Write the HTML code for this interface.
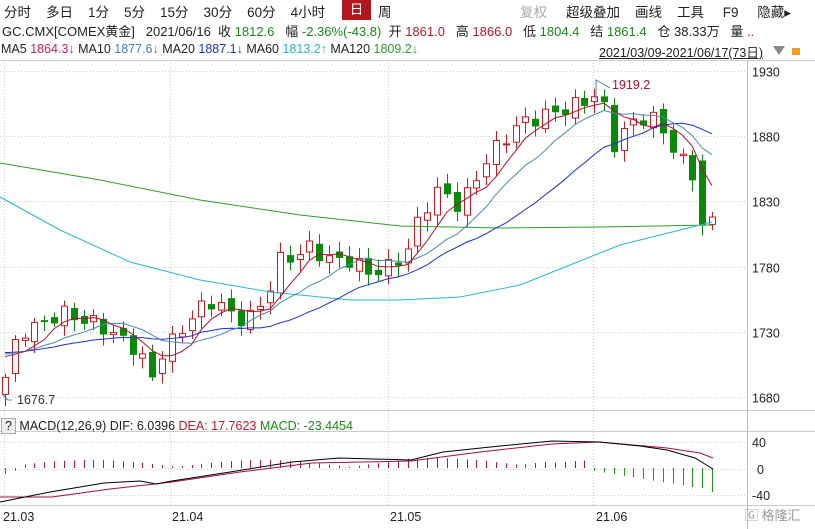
<!DOCTYPE html><html><head><meta charset="utf-8"><style>
body{margin:0;width:815px;height:529px;background:#fff;font-family:"Liberation Sans","Noto Sans CJK SC",sans-serif;overflow:hidden;position:relative}
.t{position:absolute;white-space:nowrap;font-size:13px;color:#222}
.r{color:#c0162c}.g{color:#1a8a1a}
</style></head><body>
<div class="t" style="top:1px;left:4px;font-size:13.5px;word-spacing:0">分时&nbsp;&nbsp;&nbsp;&nbsp;多日&nbsp;&nbsp;&nbsp;&nbsp;1分&nbsp;&nbsp;&nbsp;&nbsp;5分&nbsp;&nbsp;&nbsp;&nbsp;15分&nbsp;&nbsp;&nbsp;&nbsp;30分&nbsp;&nbsp;&nbsp;&nbsp;60分&nbsp;&nbsp;&nbsp;&nbsp;4小时</div>
<div style="position:absolute;left:342px;top:0;width:29px;height:20px;background:#b3171d;color:#fff;font-size:13.5px;text-align:center;line-height:20px">日</div>
<div class="t" style="top:1px;left:378px;font-size:13.5px">周</div>
<div class="t" style="top:1px;left:520px;font-size:13.5px;color:#aaa">复权</div>
<div class="t" style="top:1px;left:566px;font-size:13.5px">超级叠加&nbsp;&nbsp;&nbsp;&nbsp;画线&nbsp;&nbsp;&nbsp;&nbsp;工具&nbsp;&nbsp;&nbsp;&nbsp;&nbsp;F9&nbsp;&nbsp;&nbsp;&nbsp;&nbsp;隐藏▸</div>
<div class="t" style="top:21px;left:2px">GC.CMX[COMEX黄金]&nbsp;&nbsp;&nbsp;2021/06/16&nbsp;&nbsp;收 <span class="g">1812.6</span>&nbsp;&nbsp;&nbsp;幅 <span class="g">-2.36%(-43.8)</span>&nbsp;&nbsp;开 <span class="r">1861.0</span>&nbsp;&nbsp;&nbsp;高 <span class="r">1866.0</span>&nbsp;&nbsp;&nbsp;低 <span class="g">1804.4</span>&nbsp;&nbsp;&nbsp;结 <span class="g">1861.4</span>&nbsp;&nbsp;&nbsp;仓 38.33万&nbsp;&nbsp;&nbsp;量 <span class="r">..</span></div>
<div class="t" style="top:42px;left:1px;font-size:12.5px">MA5 <span style="color:#d4204a">1864.3↓</span> MA10 <span style="color:#4a7fb8">1877.6↓</span> MA20 <span style="color:#1a2fd8">1887.1↓</span> MA60 <span style="color:#28b8d0">1813.2↑</span> MA120 <span style="color:#2aa02a">1809.2↓</span></div>
<div class="t" style="top:42px;left:599px;font-size:12.5px;text-decoration:underline">2021/03/09-2021/06/17(73日)</div>
<div style="position:absolute;left:773px;top:46px;width:0;height:0;border-left:6px solid transparent;border-right:6px solid transparent;border-top:9px solid #888"></div>
<div style="position:absolute;left:792px;top:48px;width:8px;height:7px;background:#f0a020"></div>
<svg id="s" width="815" height="529" style="position:absolute;left:0;top:0"></svg>
<div class="t" style="top:419px;left:1px;font-size:12.5px"><span style="border:1px solid #aaa;padding:0 3px;background:#eee">?</span> MACD(12,26,9) DIF: 6.0396 <span class="r">DEA: 17.7623</span> <span class="g">MACD: -23.4454</span></div>
<script>
var s=document.getElementById('s'),h='';
function L(x1,y1,x2,y2,c,d){h+='<line x1="'+x1+'" y1="'+y1+'" x2="'+x2+'" y2="'+y2+'" stroke="'+c+'" stroke-width="1"'+(d?' stroke-dasharray="1,2"':'')+'/>';}
function T(x,y,t,c){h+='<text x="'+x+'" y="'+y+'" font-size="12.5" fill="'+(c||'#222')+'" font-family="Liberation Sans">'+t+'</text>';}
L(0,60.5,815,60.5,'#ccc');L(0,410.5,815,410.5,'#ccc');L(0,431.5,815,431.5,'#ccc');L(0,505.5,815,505.5,'#ccc');
L(747.5,60,747.5,529,'#bbb');
function Y(p){return 71+(1930-p)*1.304;}
[1930,1880,1830,1780,1730,1680].forEach(function(p){var y=Math.round(Y(p))+.5;L(0,y,747,y,'#ccc',1);T(752,y+5,p);});
[4,170,388,593].forEach(function(x){L(x+.5,60,x+.5,505,'#ccc',1);});
[[3,'21.03'],[172,'21.04'],[390,'21.05'],[596,'21.06']].forEach(function(a){T(a[0],521,a[1]);});
[[0,442,'40'],[0,469,'0'],[0,495,'-40']].forEach(function(a,i){L(0,a[1]+.5,747,a[1]+.5,'#ccc',1);T(i==2?752:i==1?757:752,a[1]+5,a[2]);});
var k=[[5,1700],[20,1730],[40,1735],[60,1745],[80,1740],[100,1735],[120,1725],[140,1715],[150,1690],[160,1712],[175,1725],[195,1745],[215,1755],[235,1740],[255,1742],[270,1765],[280,1785],[300,1790],[310,1795],[330,1785],[350,1785],[370,1775],[390,1780],[410,1795],[420,1820],[440,1840],[460,1825],[470,1840],[485,1860],[500,1875],[520,1890],[540,1895],[560,1900],[580,1905],[595,1912],[605,1900],[612,1872],[625,1885],[640,1895],[655,1893],[670,1875],[680,1862],[690,1855],[702,1812],[712,1818]];
function interp(x){for(var i=1;i<k.length;i++)if(x<=k[i][0]){var a=k[i-1],b=k[i];return a[1]+(b[1]-a[1])*(x-a[0])/(b[0]-a[0]);}return k[k.length-1][1];}
var n=73,C=[],X=[];for(var i=0;i<n;i++){var x=5+i*(707/72);X.push(x);var w=Math.sin(i*2.3)*6;C.push(interp(x)+w*(i<70?1:0));}
C[0]=1695;C[n-2]=1812;C[n-1]=1818;
var O=[1682];for(i=1;i<n;i++)O.push(C[i-1]+Math.sin(i*1.7)*3);O[n-2]=1861;
for(i=0;i<n;i++){var o=O[i],c=C[i],hi=Math.max(o,c)+3+Math.abs(Math.sin(i*3.1))*5,lo=Math.min(o,c)-3-Math.abs(Math.cos(i*2.2))*6;if(i==n-2){hi=1866;lo=1804;}
var up=c>=o,col=up?'#d0181e':'#0a8a0a',x=Math.round(X[i])+.5;
L(x,Y(hi),x,Y(lo),col);var t=Y(Math.max(o,c)),b=Y(Math.min(o,c));if(b-t<1)b=t+1;
h+='<rect x="'+(x-3)+'" y="'+t+'" width="6" height="'+(b-t)+'" fill="'+(up?'#fff':col)+'" stroke="'+col+'"/>';}
function ma(p){var r=[];for(var i=0;i<n;i++){var s=0;for(var j=i-p+1;j<=i;j++)s+=j<0?1715:C[j];r.push(s/p);}return r;}
function PL(arr,c){var p='';for(var i=0;i<n;i++)p+=X[i]+','+Y(arr[i])+' ';h+='<polyline points="'+p+'" fill="none" stroke="'+c+'" stroke-width="1"/>';}
function PP(pts,c){h+='<polyline points="'+pts.map(function(a){return a.join(',')}).join(' ')+'" fill="none" stroke="'+c+'" stroke-width="1"/>';}
PP([[0,163],[100,180],[200,200],[300,215],[400,226],[500,228],[600,227],[712,225]],'#2aa02a');
PP([[0,197],[60,230],[130,262],[200,280],[270,292],[350,300],[400,300],[460,297],[520,285],[570,265],[620,245],[680,230],[712,222]],'#28b8d0');
PL(ma(20),'#1a2fd8');PL(ma(10),'#4a8ab0');PL(ma(5),'#b01030');
PP([[3,395],[8,400],[12,400]],'#4a7fb8');T(17,404,'1676.7','#333');
PP([[610,88],[596,80],[596,100]],'#4a7fb8');T(612,89,'1919.2','#b01030');
// MACD histogram
for(i=0;i<n;i++){var v;
 if(i<2)v=-6+i*3;else if(i<60)v=1+7*Math.abs(Math.sin(i*0.18))+ (i>40&&i<56?2:0);else v=-(3+(i-60)*1.6);
 if(i==n-2)v=-20;if(i==n-1)v=-24;
 var x=Math.round(X[i])+.5;L(x,468,x,468-v,v>0?'#c0162c':'#1a9a1a');}
PP([[0,497],[52,497],[110,489],[172,482],[240,472],[312,463],[411,461],[480,452],[552,444],[599,442],[667,448],[700,453],[713,458]],'#a01040');
PP([[0,502],[50,492],[104,483],[140,481],[156,484],[172,481],[230,472],[292,462],[339,458],[411,460],[443,452],[500,446],[552,441],[599,442],[640,446],[667,450],[695,458],[713,469]],'#000');
s.innerHTML=h;
</script>
<div class="t" style="top:505px;left:745px;font-size:13px;color:#999">🄶 格隆汇</div>
</body></html>
